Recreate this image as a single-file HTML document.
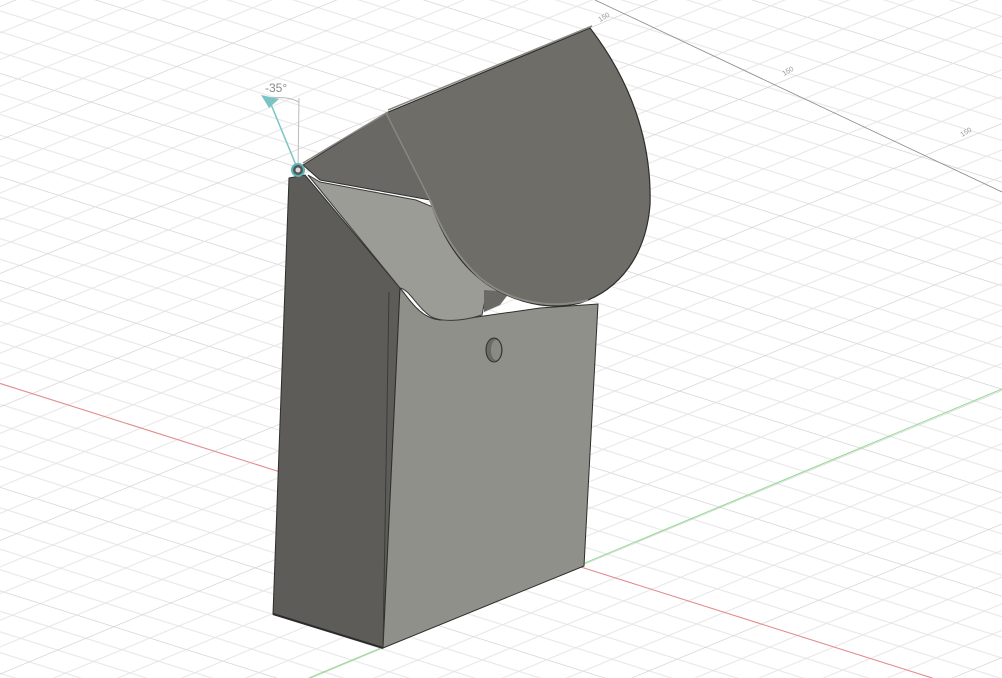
<!DOCTYPE html>
<html><head><meta charset="utf-8"><style>
html,body{margin:0;padding:0;background:#fff;width:1002px;height:678px;overflow:hidden;}
svg{display:block;overflow:hidden;}
</style></head><body>
<svg width="1002" height="678" viewBox="0 0 1002 678" xmlns="http://www.w3.org/2000/svg">
<defs>
<pattern id="pr" patternUnits="userSpaceOnUse" width="2000" height="103.5" y="73" patternTransform="skewY(17.5)">
<line x1="0" y1="0" x2="2000" y2="0" stroke="#c9c9c9" stroke-width="1.2"/>
<line x1="0" y1="20.7" x2="2000" y2="20.7" stroke="#e4e4e4"/>
<line x1="0" y1="41.4" x2="2000" y2="41.4" stroke="#e4e4e4"/>
<line x1="0" y1="62.1" x2="2000" y2="62.1" stroke="#e4e4e4"/>
<line x1="0" y1="82.8" x2="2000" y2="82.8" stroke="#e4e4e4"/>
</pattern>
<pattern id="pg" patternUnits="userSpaceOnUse" width="2000" height="133.5" y="6.2" patternTransform="skewY(-22.6)">
<line x1="0" y1="0" x2="2000" y2="0" stroke="#c9c9c9" stroke-width="1.2"/>
<line x1="0" y1="26.7" x2="2000" y2="26.7" stroke="#e4e4e4"/>
<line x1="0" y1="53.4" x2="2000" y2="53.4" stroke="#e4e4e4"/>
<line x1="0" y1="80.1" x2="2000" y2="80.1" stroke="#e4e4e4"/>
<line x1="0" y1="106.8" x2="2000" y2="106.8" stroke="#e4e4e4"/>
</pattern>
</defs>
<rect width="1002" height="678" fill="#fff"/>
<rect x="0" y="0" width="1002" height="678" fill="url(#pr)"/>
<rect x="0" y="0" width="1002" height="678" fill="url(#pg)"/>
<line x1="0" y1="383.4" x2="932" y2="678" stroke="#e58a8a" stroke-width="1"/>
<line x1="309" y1="678" x2="1002" y2="389" stroke="#8fdc8f" stroke-width="1"/>
<line x1="595" y1="0" x2="1002" y2="192" stroke="#8a8a8a" stroke-width="0.8"/>
<text x="600" y="22" font-family="Liberation Sans,sans-serif" font-size="7" fill="#999" transform="rotate(-30 600 22)">150</text>
<text x="784" y="76" font-family="Liberation Sans,sans-serif" font-size="7" fill="#999" transform="rotate(-30 784 76)">150</text>
<text x="962" y="137" font-family="Liberation Sans,sans-serif" font-size="7" fill="#999" transform="rotate(-30 962 137)">150</text>

<polygon points="289,178 305,175 400,288 383,648 273,614" fill="#5d5c58" stroke="#2e2e2c" stroke-width="1"/>
<path d="M400,288 C410,300 420,318 440,320 L470,318 L540,308 L598,304 L584,566 L383,648 Z" fill="#90908b" stroke="#2e2e2c" stroke-width="1"/>
<line x1="389" y1="292" x2="383" y2="648" stroke="#3a3a38" stroke-width="1"/>
<line x1="273" y1="614" x2="383" y2="648" stroke="#2a2a28" stroke-width="2"/>
<path d="M308,175 L320,182 L416,200 L440,210 C460,245 480,275 510,295 L485,300 L482,315 C460,322 440,322 430,316 C415,305 410,290 400,288 Z" fill="#9c9c97" stroke="#3a3a38" stroke-width="1"/>
<polygon points="484,290 510,292 500,305 484,312" fill="#6a6965"/>
<polygon points="303,165 386,113 430,200 320,180" fill="#696864" stroke="#2e2e2c" stroke-width="1"/>
<path d="M386,113 L590,28 C630,80 652,140 650,205 C646,255 620,290 580,303 C545,312 500,300 470,270 C450,250 438,225 430,200 Z" fill="#6f6d68" stroke="#2e2e2c" stroke-width="1.2"/>
<path d="M430,200 C440,228 455,255 480,278 C510,302 550,310 588,300" fill="none" stroke="#8a8984" stroke-width="2"/>
<line x1="388" y1="110" x2="592" y2="26" stroke="#8a8984" stroke-width="1.5"/>
<line x1="386" y1="113" x2="430" y2="200" stroke="#8a8984" stroke-width="1.5"/>
<line x1="303" y1="163" x2="388" y2="112" stroke="#8a8984" stroke-width="1.5"/>
<ellipse cx="494" cy="350" rx="8" ry="12" fill="#6a6965" stroke="#2e2e2c"/>
<ellipse cx="496" cy="350" rx="5" ry="10" fill="#8a8a85"/>
<line x1="298" y1="170" x2="299" y2="98" stroke="#bbb" stroke-width="1"/>
<path d="M270,98 Q288,96 299,102" fill="none" stroke="#bbb" stroke-width="1"/>
<line x1="298" y1="170" x2="268" y2="97" stroke="#7cc4c4" stroke-width="1.5"/>
<polygon points="261,95 279,99 269,108" fill="#7cc4c4"/>
<text x="265" y="92" font-family="Liberation Sans,sans-serif" font-size="12" fill="#8a8a8a">-35°</text>
<circle cx="298" cy="170" r="6" fill="#555" stroke="#5bb5b5" stroke-width="2"/>
<circle cx="298" cy="170" r="2.5" fill="#ddd"/>
</svg>
</body></html>
